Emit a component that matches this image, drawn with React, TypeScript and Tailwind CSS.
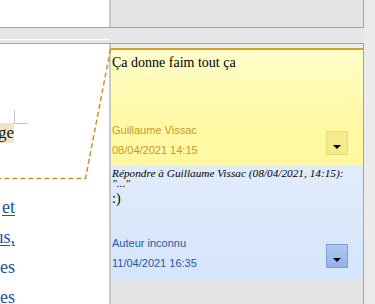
import React from "react";

const serif = "font-['Liberation_Serif',serif]";
const sans = "font-['Liberation_Sans',Arial,sans-serif]";

function DropButton({ tone }: { tone: "yellow" | "blue" }) {
  const look =
    tone === "yellow"
      ? "bg-[#f6ea8c] border-[#ebdc7a]"
      : "bg-gradient-to-b from-[#aec9f2] to-[#93b2e8] border-[#7c9fd8]";
  return (
    <div className={`w-[22px] h-[24px] mb-[1px] border flex items-end justify-center pb-[5px] ${look}`}>
      <svg width="8" height="4" viewBox="0 0 8 4">
        <polygon points="0,0 8,0 4,4" fill="#000" />
      </svg>
    </div>
  );
}

function DocLine({ hidden, shown, underline }: { hidden: string; shown: string; underline?: boolean }) {
  return (
    <div className="shrink-0 w-[15px] h-[30px] leading-[30px] overflow-hidden flex justify-end whitespace-pre">
      <span>
        {hidden}
        <span className={underline ? "underline decoration-1 underline-offset-2" : ""}>{shown}</span>
      </span>
    </div>
  );
}

export default function App() {
  return (
    <div className="relative w-[375px] h-[304px] overflow-hidden bg-[#ebebeb] flex flex-col">
      {/* previous comment, bottom end */}
      <div className="flex h-[28px] shrink-0">
        <div className="w-[364px] flex border-b border-[#a3a3a3]">
          <div className="w-[111px] bg-white border-r-2 border-[#c8c8c8]" />
          <div className="flex-1 bg-[#e4e4e4] border-r border-[#a3a3a3]" />
        </div>
      </div>

      {/* gap between pages */}
      <div className="flex h-[16px] shrink-0">
        <div className="w-[364px] bg-[#e6e6e6] border-b border-[#a3a3a3] flex flex-col">
          <div className="h-[11px]" />
          <div className="w-[110px] h-[1px] bg-white" />
        </div>
      </div>

      <div className="flex flex-1 min-h-0">
        {/* document page */}
        <div className={`w-[111px] bg-white border-r-2 border-[#c8c8c8] flex flex-col overflow-hidden ${serif}`}>
          <div className="shrink-0 ml-[14px] mt-[66px] w-[14px] h-[14px] border-l border-b border-[#c4c4c4]" />
          <div className="shrink-0 w-[14px] h-[20px] -mt-[1px] text-[17px] leading-[20px] overflow-hidden flex justify-end whitespace-nowrap bg-[#f0e5c4] text-[#1a1a1a]">
            <span>image</span>
          </div>
          <div className="shrink-0 mt-[49px] text-[18px] text-[#2050a6] flex flex-col">
            <DocLine hidden="ou  " shown="et" underline />
            <DocLine hidden="no" shown="us," underline />
            <DocLine hidden="tout" shown="es" />
            <DocLine hidden="chos" shown="es" />
          </div>
        </div>

        {/* comments column */}
        <div className="w-[253px] flex flex-col border-r border-[#a3a3a3] bg-[#e4e4e4]">
          <div className="shrink-0 h-[4px] bg-[#ececec]" />
          <div className="shrink-0 h-[2px] bg-[#d4a02c]" />

          {/* yellow comment */}
          <div className="shrink-0 h-[116px] flex flex-col bg-gradient-to-b from-[#fffdcc] via-[#fffaa8] to-[#fff8a0] pl-[1px] pr-[15px] pb-[10px]">
            <div className={`${serif} text-[14px] leading-[16px] text-black pt-[5px]`}>Ça donne faim tout ça</div>
            <div className="flex-1" />
            <div className="flex justify-between items-end">
              <div className={`${sans} text-[11px] leading-[12px] text-[#c99a2a] flex flex-col gap-[8px]`}>
                <span>Guillaume Vissac</span>
                <span>08/04/2021 14:15</span>
              </div>
              <DropButton tone="yellow" />
            </div>
          </div>

          {/* blue reply */}
          <div className="shrink-0 h-[113px] flex flex-col bg-gradient-to-b from-[#e1ecfb] to-[#d6e5fb] pl-[1px] pr-[15px] pb-[10px]">
            <div className={`${serif} italic text-[11.3px] leading-[10px] text-black pt-[2px] whitespace-nowrap`}>
              Répondre à Guillaume Vissac (08/04/2021, 14:15):
            </div>
            <div className={`${serif} italic text-[11.3px] leading-[10px] text-black`}>"..."</div>
            <div className={`${serif} text-[14px] leading-[16px] text-black mt-[3px]`}>:)</div>
            <div className="flex-1" />
            <div className="flex justify-between items-end">
              <div className={`${sans} text-[11px] leading-[12px] text-[#2858a8] flex flex-col gap-[8px]`}>
                <span>Auteur inconnu</span>
                <span>11/04/2021 16:35</span>
              </div>
              <DropButton tone="blue" />
            </div>
          </div>
        </div>
      </div>

      {/* anchor line from comment to text */}
      <svg className="absolute left-0 top-0 pointer-events-none" width="375" height="304">
        <polyline
          points="110.5,49 85.5,178.5 0,178.5"
          fill="none"
          stroke="#c8961e"
          strokeWidth="1.5"
          strokeDasharray="5 3"
        />
      </svg>
    </div>
  );
}
